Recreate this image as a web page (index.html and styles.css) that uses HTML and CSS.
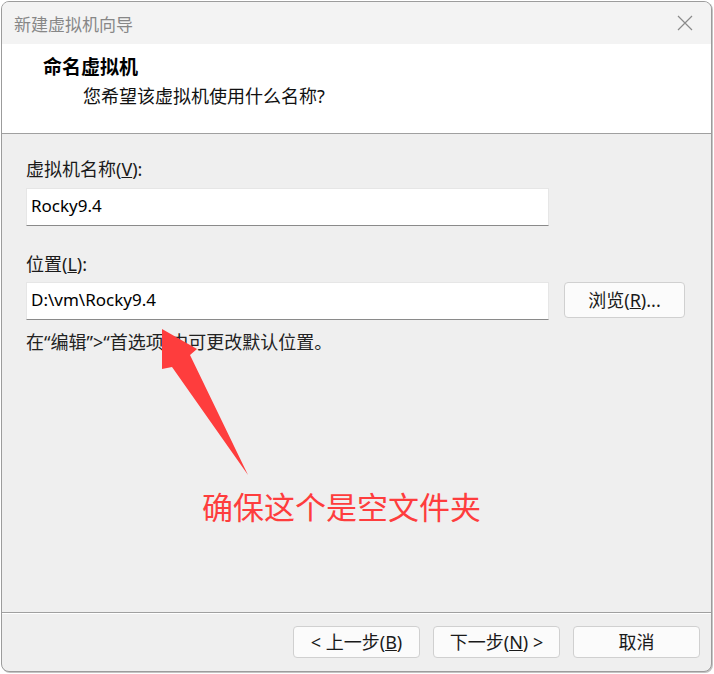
FILE: index.html
```html
<!DOCTYPE html>
<html lang="zh-CN">
<head>
    <meta charset="UTF-8">
    <title>新建虚拟机向导</title>
    <link rel="stylesheet" href="styles.css">
</head>
<body>
    <div class="screen">
        <div class="window">
            <div class="titlebar">
                <span class="title">新建虚拟机向导</span>
                <svg class="close" width="16" height="16" viewBox="0 0 16 16">
                    <path d="M1 1 L15 15 M15 1 L1 15" stroke="#8a8a8a" stroke-width="1.2" fill="none"/>
                </svg>
            </div>
            <div class="header">
                <h1>命名虚拟机</h1>
                <p>您希望该虚拟机使用什么名称?</p>
            </div>
            <div class="content">
                <label class="label">虚拟机名称(<u>V</u>):</label>
                <div class="field">Rocky9.4</div>
                <label class="label second">位置(<u>L</u>):</label>
                <div class="field-row">
                    <div class="field">D:\vm\Rocky9.4</div>
                    <button class="btn browse">浏览(<u>R</u>)...</button>
                </div>
                <p class="hint">在“编辑”&gt;“首选项”中可更改默认位置。</p>
            </div>
            <div class="footer">
                <button class="btn">&lt; 上一步(<u>B</u>)</button>
                <button class="btn">下一步(<u>N</u>) &gt;</button>
                <button class="btn">取消</button>
            </div>
        </div>

        <!-- annotation drawn on top of the screenshot -->
        <svg class="arrow" width="714" height="674" viewBox="0 0 714 674">
            <polygon points="162,329 197,349 190,355 248,475 172,367 162,369" fill="#fe3d3d"/>
        </svg>
        <div class="note">确保这个是空文件夹</div>
    </div>
</body>
</html>
```

FILE: styles.css
```css
body {
    margin: 0;
    background-color: #ffffff;
    font-family: "Noto Sans", "Noto Sans CJK SC", sans-serif;
    color: #1a1a1a;
}
.screen {
    position: relative;
    width: 714px;
    height: 674px;
    overflow: hidden;
}
.window {
    box-sizing: border-box;
    margin: 1px 0 0 1px;
    width: 711px;
    height: 671px;
    border: 1px solid #9c9c9c;
    border-radius: 8px;
    box-shadow: 1px 1px 0 #c4c4c4;
    background-color: #efefef;
    overflow: hidden;
    display: flex;
    flex-direction: column;
}
.titlebar {
    height: 42px;
    background-color: #f3f3f3;
    display: flex;
    align-items: center;
    justify-content: space-between;
    padding: 0 18px 0 12px;
}
.title {
    font-size: 17px;
    color: #878787;
}
.header {
    height: 89px;
    box-sizing: border-box;
    background-color: #ffffff;
    padding: 11px 0 0 41px;
}
.header h1 {
    margin: 0;
    font-size: 19px;
    line-height: 24px;
    font-weight: bold;
    color: #000;
}
.header p {
    margin: 5px 0 0 40px;
    font-size: 18px;
    line-height: 24px;
    color: #111;
}
.content {
    flex: 1;
    border-top: 1px solid #a0a0a0;
    border-bottom: 1px solid #a0a0a0;
    padding: 23px 0 0 24px;
    display: flex;
    flex-direction: column;
    align-items: flex-start;
}
.label {
    font-size: 18px;
    line-height: 24px;
    color: #1a1a1a;
}
.label.second {
    margin-top: 26px;
}
.field {
    box-sizing: border-box;
    width: 523px;
    height: 38px;
    margin-top: 7px;
    padding: 4px 0 0 4px;
    background-color: #ffffff;
    border: 1px solid #e6e6e6;
    border-bottom: 1px solid #8a8a8a;
    font-size: 17px;
    line-height: 26px;
    color: #000;
}
.field-row {
    display: flex;
    align-items: flex-start;
    gap: 15px;
}
.field-row .field {
    margin-top: 6px;
}
.btn {
    box-sizing: border-box;
    width: 127px;
    height: 32px;
    padding: 0;
    background-color: #fbfbfb;
    border: 1px solid #d0d0d0;
    border-radius: 4px;
    font-family: "Noto Sans", "Noto Sans CJK SC", sans-serif;
    font-size: 18px;
    line-height: 28px;
    color: #1a1a1a;
}
.browse {
    width: 121px;
    height: 36px;
    margin-top: 6px;
}
.hint {
    margin: 10px 0 0;
    font-size: 18px;
    line-height: 24px;
    color: #222;
}
.footer {
    box-sizing: border-box;
    height: 58px;
    flex-shrink: 0;
    border-top: 1px solid #ffffff;
    display: flex;
    justify-content: flex-end;
    gap: 13px;
    padding: 12px 11px 0 0;
}
.arrow {
    position: absolute;
    left: 0;
    top: 0;
}
.note {
    position: absolute;
    left: 202px;
    top: 489px;
    font-family: "Noto Sans CJK SC", sans-serif;
    font-size: 31px;
    line-height: 34px;
    color: #fe3d3d;
    white-space: nowrap;
}
```
